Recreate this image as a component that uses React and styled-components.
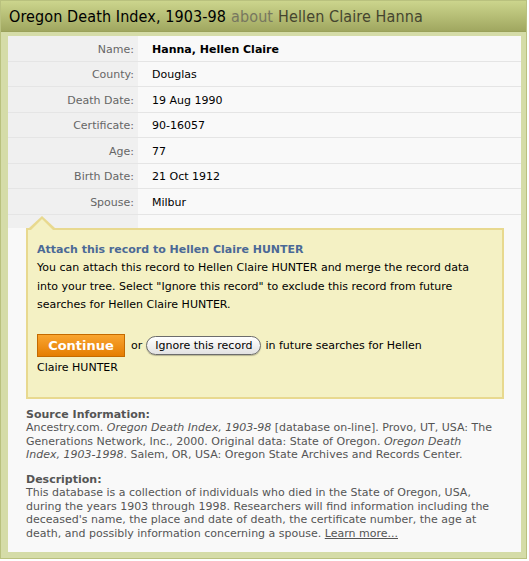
import React from 'react';
import styled, {createGlobalStyle} from 'styled-components';

const GlobalStyle = createGlobalStyle`
    body {
        margin: 0;
        background: #ffffff;
        font-family: "DejaVu Sans", Verdana, sans-serif;
    }
`;

const Frame = styled.div`
    width: 525px;
    border: 1px solid #b9c17e;
    background: #d5dca8;
`;

const Header = styled.h1`
    margin: 0;
    height: 30px;
    padding: 0 8px;
    display: flex;
    align-items: center;
    background: linear-gradient(#ccd58d, #a0a760);
    border-bottom: 1px solid #9aa15a;
    font-family: "DejaVu Sans Condensed", "DejaVu Sans", sans-serif;
    font-size: 16px;
    font-weight: normal;
    color: #000;
    letter-spacing: 0.1px;
`;

const About = styled.span`
    color: #77775f;
    margin: 0 5px;
`;

const Person = styled.span`
    color: #45452f;
`;

const Body = styled.div`
    padding: 4px 5px 6px 7px;
`;

const Panel = styled.div`
    background: #f9f9f9;
    padding-bottom: 12px;
`;

const Table = styled.div`
    display: grid;
    grid-template-columns: 130px 1fr;
`;

const Label = styled.div`
    background: #f0f0f0;
    border-bottom: 1px solid #e5e5e5;
    height: 22.5px;
    padding: 2px 4px 0 0;
    display: flex;
    align-items: center;
    justify-content: flex-end;
    font-size: 11px;
    color: #666;
`;

const Value = styled.div`
    border-bottom: 1px solid #e5e5e5;
    height: 22.5px;
    padding: 2px 0 0 14px;
    display: flex;
    align-items: center;
    font-size: 11px;
    font-weight: ${p => (p.$bold ? 'bold' : 'normal')};
    color: #000;
`;

const Spacer = styled.div`
    background: ${p => (p.$shade ? '#f0f0f0' : 'transparent')};
    height: 13px;
`;

const Callout = styled.div`
    position: relative;
    margin: 0 17px 0 18px;
    padding: 11px 9px 19px;
    background: #f4f1c4;
    border: 2px solid #e8d98f;
    font-size: 11px;
    line-height: 18.6px;
    color: #000;

    &::before, &::after {
        content: "";
        position: absolute;
        left: 1px;
        width: 0;
        height: 0;
        border-left: 13px solid transparent;
        border-right: 13px solid transparent;
    }
    &::before {
        top: -14px;
        border-bottom: 12px solid #e8d98f;
    }
    &::after {
        top: -11px;
        left: 3px;
        border-left-width: 11px;
        border-right-width: 11px;
        border-bottom: 11px solid #f4f1c4;
    }
`;

const CalloutTitle = styled.div`
    font-weight: bold;
    color: #4b6996;
`;

const Text = styled.p`
    margin: 0;
`;

const Actions = styled.p`
    margin: 19px 0 0;
    line-height: 21px;
`;

const ContinueButton = styled.button`
    display: inline-block;
    vertical-align: middle;
    width: 88px;
    height: 23px;
    padding: 0;
    margin-right: 6px;
    border: 1px solid #c46a00;
    background: linear-gradient(#f9a530, #e57d02);
    color: #fff;
    font-family: "DejaVu Sans", Verdana, sans-serif;
    font-size: 13px;
    font-weight: bold;
`;

const IgnoreButton = styled.button`
    display: inline-block;
    vertical-align: middle;
    height: 19px;
    padding: 0 8px;
    margin: 0 4px 0 4px;
    border: 1px solid #6c6c6c;
    border-radius: 10px;
    background: linear-gradient(#ffffff, #e2e2e2);
    box-shadow: 0 1px 1px rgba(0, 0, 0, 0.25);
    color: #000;
    font-family: "DejaVu Sans", Verdana, sans-serif;
    font-size: 11px;
`;

const Section = styled.div`
    padding: ${p => p.$top}px 26px 0 18px;
    font-size: 11px;
    line-height: 13.5px;
    color: #555;
`;

const SectionTitle = styled.div`
    font-weight: bold;
`;

const Link = styled.a`
    color: #555;
    text-decoration: underline;
`;

const rows = [
    ['Name:', 'Hanna, Hellen Claire', true],
    ['County:', 'Douglas'],
    ['Death Date:', '19 Aug 1990'],
    ['Certificate:', '90-16057'],
    ['Age:', '77'],
    ['Birth Date:', '21 Oct 1912'],
    ['Spouse:', 'Milbur'],
];

export default function App() {
    return (
        <>
            <GlobalStyle/>
            <Frame>
                <Header>
                    Oregon Death Index, 1903-98<About>about</About><Person>Hellen Claire Hanna</Person>
                </Header>
                <Body>
                    <Panel>
                        <Table>
                            {rows.map(([label, value, bold]) => (
                                <React.Fragment key={label}>
                                    <Label>{label}</Label>
                                    <Value $bold={bold}>{value}</Value>
                                </React.Fragment>
                            ))}
                            <Spacer $shade/>
                            <Spacer/>
                        </Table>
                        <Callout>
                            <CalloutTitle>Attach this record to Hellen Claire HUNTER</CalloutTitle>
                            <Text>
                                You can attach this record to Hellen Claire HUNTER and merge the record data
                                into your tree. Select "Ignore this record" to exclude this record from future
                                searches for Hellen Claire HUNTER.
                            </Text>
                            <Actions>
                                <ContinueButton>Continue</ContinueButton>or
                                <IgnoreButton>Ignore this record</IgnoreButton>in future searches for Hellen<br/>
                                Claire HUNTER
                            </Actions>
                        </Callout>
                        <Section $top={9}>
                            <SectionTitle>Source Information:</SectionTitle>
                            Ancestry.com. <i>Oregon Death Index, 1903-98</i> [database on-line]. Provo, UT, USA: The
                            Generations Network, Inc., 2000. Original data: State of Oregon. <i>Oregon Death
                            Index, 1903-1998</i>. Salem, OR, USA: Oregon State Archives and Records Center.
                        </Section>
                        <Section $top={11}>
                            <SectionTitle>Description:</SectionTitle>
                            This database is a collection of individuals who died in the State of Oregon, USA,
                            during the years 1903 through 1998. Researchers will find information including the
                            deceased's name, the place and date of death, the certificate number, the age at
                            death, and possibly information concerning a spouse. <Link href="#">Learn more...</Link>
                        </Section>
                    </Panel>
                </Body>
            </Frame>
        </>
    );
}
